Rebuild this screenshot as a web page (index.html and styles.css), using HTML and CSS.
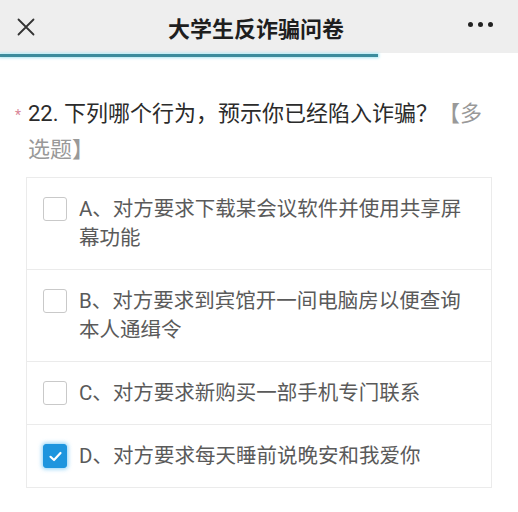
FILE: index.html
```html
<!DOCTYPE html>
<html lang="zh-CN">
<head>
<meta charset="utf-8">
<title>大学生反诈骗问卷</title>
<link rel="stylesheet" href="styles.css">
</head>
<body>
<header class="topbar">
  <div class="topbar-left">
    <svg class="icon-close" width="18" height="18" viewBox="0 0 18 18"><path d="M1.5 1.5 L16.5 16.5 M16.5 1.5 L1.5 16.5" stroke="#333" stroke-width="1.8" fill="none" stroke-linecap="round"/></svg>
  </div>
  <div class="topbar-title">大学生反诈骗问卷</div>
  <div class="topbar-right">
    <span class="dot"></span><span class="dot"></span><span class="dot"></span>
  </div>
</header>
<div class="progress"><div class="progress-bar" style="width:378px"></div></div>

<main class="content">
  <div class="question">
    <span class="req">*</span>
    <div class="q-text">22. 下列哪个行为，预示你已经陷入诈骗？<span class="q-type">【多选题】</span></div>
  </div>
  <div class="options">
    <div class="option">
      <span class="check"></span>
      <div class="opt-text">A、对方要求下载某会议软件并使用共享屏幕功能</div>
    </div>
    <div class="option">
      <span class="check"></span>
      <div class="opt-text">B、对方要求到宾馆开一间电脑房以便查询本人通缉令</div>
    </div>
    <div class="option">
      <span class="check"></span>
      <div class="opt-text">C、对方要求新购买一部手机专门联系</div>
    </div>
    <div class="option">
      <span class="check checked"><svg width="15" height="15" viewBox="0 0 15 15"><path d="M2.5 7.8 L6 11 L12.5 4" stroke="#fff" stroke-width="2.2" fill="none" stroke-linecap="round" stroke-linejoin="round"/></svg></span>
      <div class="opt-text">D、对方要求每天睡前说晚安和我爱你</div>
    </div>
  </div>
</main>
</body>
</html>
```
FILE: styles.css
```css
html, body {
  margin: 0;
  padding: 0;
  background: #ffffff;
}
body {
  font-family: Roboto, "Noto Sans CJK SC", sans-serif;
  color: #333;
  width: 518px;
}
.topbar {
  height: 53px;
  background: #eeeeee;
  display: grid;
  grid-template-columns: 1fr auto 1fr;
  align-items: center;
}
.topbar-left {
  padding-left: 17px;
  display: flex;
  align-items: center;
  padding-top: 1px;
}
.topbar-title {
  font-size: 22px;
  font-weight: 700;
  color: #1e1e1e;
  padding-right: 6px;
  padding-top: 1px;
}
.topbar-right {
  display: flex;
  justify-content: flex-end;
  gap: 5px;
  padding-right: 25px;
  padding-bottom: 5px;
}
.dot {
  width: 5px;
  height: 5px;
  border-radius: 50%;
  background: #222;
}
.progress {
  height: 4px;
  margin-top: 1px;
  background: #ffffff;
}
.progress-bar {
  height: 3px;
  background: #3b8c9d;
  box-shadow: 0 0 3px 1px #a8e6f2;
}
.content {
  padding: 38px 26px 0 26px;
}
.question {
  display: flex;
  align-items: flex-start;
}
.req {
  width: 0;
  margin-left: -11px;
  margin-right: 12px;
  color: #d98597;
  font-size: 14px;
  line-height: 14px;
  padding-top: 12px;
}
.q-text {
  flex: 1;
  font-size: 22px;
  line-height: 36px;
  color: #2b2b2b;
  padding-left: 1px;
}
.q-type {
  color: #999;
}
.options {
  margin-top: 9px;
  border: 1px solid #ebebeb;
}
.option {
  display: flex;
  align-items: flex-start;
  padding: 17px 16px 16px 16px;
  border-top: 1px solid #ebebeb;
}
.option:first-child {
  border-top: none;
}
.check {
  flex: none;
  width: 22px;
  height: 22px;
  border: 1px solid #c9c9c9;
  border-radius: 3px;
  margin-top: 2px;
  margin-right: 12px;
  display: flex;
  align-items: center;
  justify-content: center;
}
.check.checked {
  background: #1e95de;
  border-color: #1e95de;
  box-shadow: 0 0 4px 1px rgba(40, 170, 240, 0.55);
}
.opt-text {
  font-size: 20.5px;
  line-height: 29px;
  color: #5a5a5a;
}
```
